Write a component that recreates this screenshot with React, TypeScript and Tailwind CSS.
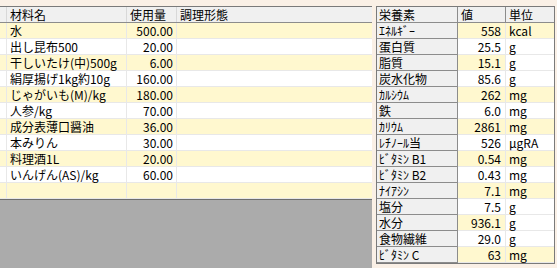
import React from 'react';

const font = "font-['Liberation_Sans_Narrow','Noto_Sans_CJK_JP',sans-serif] text-[12px] leading-[15px] text-black";

export default function App() {
  const ingredients = [
    { name: '水', amount: '500.00' },
    { name: '出し昆布500', amount: '20.00' },
    { name: '干しいたけ(中)500g', amount: '6.00' },
    { name: '絹厚揚げ1kg約10g', amount: '160.00' },
    { name: 'じゃがいも(M)/kg', amount: '180.00' },
    { name: '人参/kg', amount: '70.00' },
    { name: '成分表薄口醤油', amount: '36.00' },
    { name: '本みりん', amount: '30.00' },
    { name: '料理酒1L', amount: '20.00' },
    { name: 'いんげん(AS)/kg', amount: '60.00' },
    { name: '', amount: '' },
  ];

  const nutrients = [
    { name: 'ｴﾈﾙｷﾞｰ', value: '558', unit: 'kcal', unitWhite: false },
    { name: '蛋白質', value: '25.5', unit: 'g', unitWhite: false },
    { name: '脂質', value: '15.1', unit: 'g', unitWhite: true },
    { name: '炭水化物', value: '85.6', unit: 'g', unitWhite: false },
    { name: 'ｶﾙｼｳﾑ', value: '262', unit: 'mg', unitWhite: false },
    { name: '鉄', value: '6.0', unit: 'mg', unitWhite: false },
    { name: 'ｶﾘｳﾑ', value: '2861', unit: 'mg', unitWhite: false },
    { name: 'ﾚﾁﾉｰﾙ当', value: '526', unit: 'μgRA', unitWhite: false },
    { name: 'ﾋﾞﾀﾐﾝ B1', value: '0.54', unit: 'mg', unitWhite: false },
    { name: 'ﾋﾞﾀﾐﾝ B2', value: '0.43', unit: 'mg', unitWhite: false },
    { name: 'ﾅｲｱｼﾝ', value: '7.1', unit: 'mg', unitWhite: false },
    { name: '塩分', value: '7.5', unit: 'g', unitWhite: false },
    { name: '水分', value: '936.1', unit: 'g', unitWhite: true },
    { name: '食物繊維', value: '29.0', unit: 'g', unitWhite: false },
    { name: 'ﾋﾞﾀﾐﾝ C', value: '63', unit: 'mg', unitWhite: false },
  ];

  return (
    <div className={`w-[557px] h-[268px] bg-[#faf0e6] flex pt-[6px] overflow-hidden ${font}`}>
      {/* left: ingredients grid */}
      <div className="w-[372px] flex flex-col">
        <div className="flex h-[17px] bg-[#f0f0f0] border-t border-t-[#7a7a7a] border-b border-b-[#8c8c8c]">
          <div className="w-[7px] border-r border-[#d8d8d8]" />
          <div className="w-[120px] pl-[3px] border-r border-[#d8d8d8]">材料名</div>
          <div className="w-[50px] pl-[3px] border-r border-[#d8d8d8]">使用量</div>
          <div className="flex-1 pl-[3px]">調理形態</div>
        </div>
        {ingredients.map((row, i) => (
          <div
            key={i}
            className={`flex h-[16px] border-b border-[#e8e8e8] ${i % 2 === 0 ? 'bg-[#fff8cf]' : 'bg-white'}`}
          >
            <div className="w-[7px] border-r border-[#e8e8e8]" />
            <div className="w-[120px] pl-[3px] border-r border-[#e8e8e8] whitespace-nowrap">{row.name}</div>
            <div className="w-[50px] pr-[3px] text-right border-r border-[#e8e8e8]">{row.amount}</div>
            <div className="flex-1" />
          </div>
        ))}
        <div className="flex-1 bg-[#ababab] border-t border-[#6e6e6e]" />
      </div>

      {/* right: nutrients grid */}
      <div className="ml-[4px] w-[179px] self-start flex flex-col border border-[#7a7a7a]">
        <div className="flex h-[16px] bg-[#f0f0f0] border-b border-[#8c8c8c]">
          <div className="w-[81px] pl-[2px] border-r border-[#8c8c8c]">栄養素</div>
          <div className="w-[48px] pl-[3px] border-r border-[#8c8c8c]">値</div>
          <div className="flex-1 pl-[3px]">単位</div>
        </div>
        {nutrients.map((n, i) => {
          const yellow = i % 2 === 0;
          return (
            <div key={n.name} className="flex h-[16px]">
              <div className="w-[81px] pl-[2px] bg-[#f0f0f0] border-r border-b border-[#8c8c8c] whitespace-nowrap">
                {n.name}
              </div>
              <div
                className={`w-[48px] pr-[4px] text-right border-r border-b border-[#e8e8e8] ${yellow ? 'bg-[#fff8cf]' : 'bg-white'}`}
              >
                {n.value}
              </div>
              <div
                className={`flex-1 pl-[3px] border-b border-[#e8e8e8] ${yellow && !n.unitWhite ? 'bg-[#fff8cf]' : 'bg-white'}`}
              >
                {n.unit}
              </div>
            </div>
          );
        })}
      </div>
    </div>
  );
}
